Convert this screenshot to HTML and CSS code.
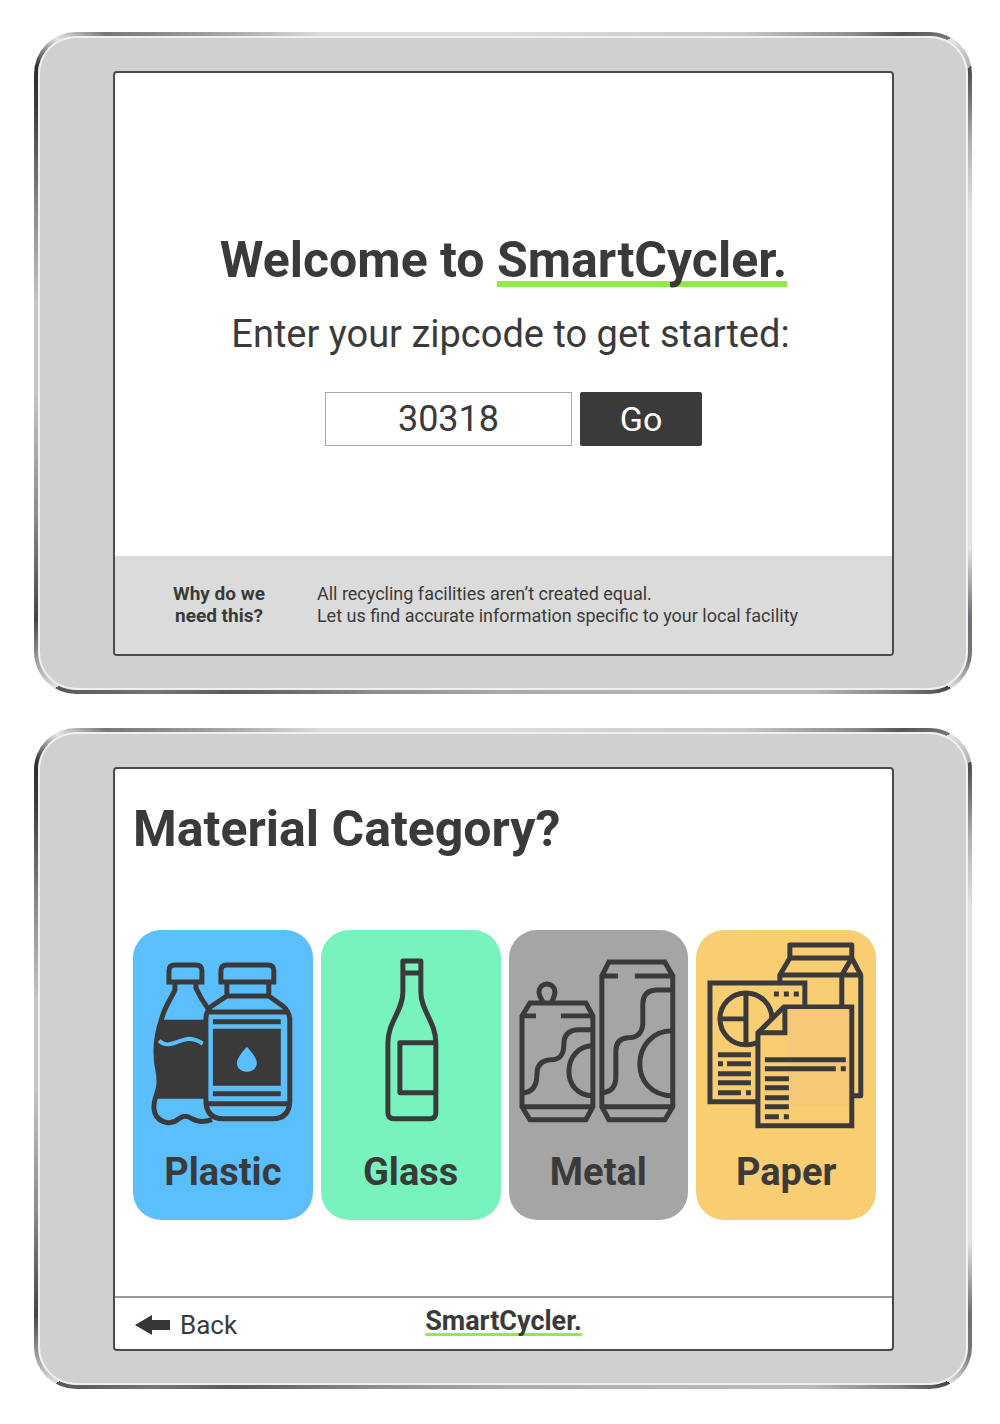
FILE: index.html
```html
<!DOCTYPE html>
<html lang="en">
<head>
<meta charset="utf-8">
<meta name="viewport" content="width=device-width, initial-scale=1">
<title>SmartCycler</title>
<link rel="stylesheet" href="styles.css">
</head>
<body>
<main class="stage">
  <section class="tablet">
    <div class="screen">
      <div class="welcome">
        <h1 class="title">Welcome to <span class="brand">SmartCycler.</span></h1>
        <form class="zip-form">
          <label class="prompt" for="zip">Enter your zipcode to get started:</label>
          <div class="zip-row">
            <input class="zip-input" id="zip" type="text" inputmode="numeric" value="30318">
            <button class="go" type="submit">Go</button>
          </div>
        </form>
      </div>
      <aside class="why">
        <h2 class="why-title">Why do we<br>need this?</h2>
        <p class="why-text">All recycling facilities aren’t created equal.<br>Let us find accurate information specific to your local facility</p>
      </aside>
    </div>
  </section>

  <section class="tablet">
    <div class="screen">
      <div class="category">
        <h2 class="title">Material Category?</h2>
        <div class="cards">
          <button class="card plastic" type="button">
            <svg class="art" viewBox="0 0 180 210" fill="none" stroke="#3a3a3a" stroke-width="5" aria-hidden="true">
              <path d="M36 52V41q0-6 6-6H63q6 0 6 6V52Z"/>
              <path d="M42 52V60C38 69 32 76 29 88C22 108 22 127 25 141C29 164 20 164 21 179C22 192 37 197 46 189Q52 184 59 189Q67 194 79 190M63 52V58Q68 69 76 80"/>
              <path d="M27 90H75V169H24C29 157 28 148 25 140C21 124 22 105 27 90Z" fill="#3a3a3a" stroke="none"/>
              <path d="M26 111C36 120 46 109 57 109Q65 110 70 114" stroke="#5bbffd" stroke-width="4"/>
              <path d="M88 52V41q0-6 6-6h41q6 0 6 6v11ZM94 52v12M136 52v12M92 66h46M94 66L79 76Q73 81 73 89V172Q74 189 90 189H140Q156 189 157 172V89Q156 81 150 76L136 66M76 82h78M73 174h84"/>
              <path d="M80 92h68M80 164h68"/>
              <path d="M80 99h68v57H80Z" fill="#3a3a3a" stroke="none"/>
              <path d="M114 117Q104 128 104 133C104 145 124 145 124 133Q124 128 114 117Z" fill="#5bbffd" stroke="none"/>
            </svg>
            <span class="name">Plastic</span>
          </button>
          <button class="card glass" type="button">
            <svg class="art" viewBox="0 0 180 210" fill="none" stroke="#3a3a3a" stroke-width="5" stroke-linejoin="round" aria-hidden="true">
              <path d="M82 31h18V62C100 81 115 92 115 113V183q0 6-6 6H73q-6 0-6-6V113C67 92 82 81 82 62ZM82 43h18M115 113H79v50h36"/>
            </svg>
            <span class="name">Glass</span>
          </button>
          <button class="card metal" type="button">
            <svg class="art" viewBox="0 0 180 210" fill="none" stroke="#3a3a3a" stroke-width="5" aria-hidden="true">
              <path d="M21 73H77L84 86V177L77 190H21L13 177V86ZM13 86H27M52 86H84M13 177H84"/>
              <path d="M34 72C31 67 30 65 30 62A8 8 0 0 1 46 62C46 65 45 67 43 72"/>
              <path d="M84 100H69Q55 101 55 114C55 127 49 130 42 130Q28 131 28 144C28 158 22 163 13 163M84 116C53 116 51 166 84 166"/>
              <path d="M100 32H156L164 46V177L156 190H100L93 177V46ZM93 46H109M126 46H164M93 177H164"/>
              <path d="M164 60H147Q134 61 134 74V94Q133 108 119 108Q107 109 107 121V147Q107 162 93 163M164 101C121 101 119 166 164 166"/>
            </svg>
            <span class="name">Metal</span>
          </button>
          <button class="card paper" type="button">
            <svg class="art" viewBox="0 0 180 210" fill="none" stroke="#3a3a3a" stroke-width="5" aria-hidden="true">
              <path d="M94 28V15h62V28ZM94 28L84 45V53M156 28L165 45V166H157M84 45H165M156 28L146 45V78" stroke-linejoin="round"/>
              <path d="M109 77V53H14V172H63"/>
              <circle cx="50" cy="89" r="26"/>
              <path d="M50 63V115M24 89H50"/>
              <path d="M78 64h5M88 64h5M98 64h5M22 125H55M22 134h5M31 134H55M22 144H55M22 153H55M22 163H45M50 163h5"/>
              <path d="M62 103L88 77H156V196H62Z" fill="#f9cd72"/>
              <path d="M91 79H153V176H92V105H91Z" fill="#f5c878" stroke="none"/>
              <path d="M62 103H89V77"/>
              <path d="M69 130H150M69 139H140M145 139h5M69 149H93M69 158H93M69 168H93M69 177H93M69 187H83M88 187h5"/>
            </svg>
            <span class="name">Paper</span>
          </button>
        </div>
      </div>
      <footer class="bar">
        <a class="back" href="#">
          <svg class="arrow" viewBox="0 0 35 20" aria-hidden="true"><path d="M0 10L17 0V5H35V15H17V20Z" fill="#3a3535"/></svg>
          Back
        </a>
        <span class="brand brand-small">SmartCycler.</span>
      </footer>
    </div>
  </section>
</main>
</body>
</html>
```
FILE: styles.css
```css
* {
  box-sizing: border-box;
}

body {
  margin: 0;
  background: #fff;
  color: #3a3a3a;
  font-family: Roboto, "Liberation Sans", sans-serif;
}

h1, h2, p {
  margin: 0;
}

button, input {
  font: inherit;
  color: inherit;
}

.stage {
  display: grid;
  gap: 34px;
  padding: 32px 28px 34px 34px;
}

.tablet {
  padding: 35px 74px 34px 75px;
  border: 4px solid transparent;
  border-radius: 42px;
  background:
    linear-gradient(#d0d0d0, #d0d0d0) padding-box,
    conic-gradient(
      #dcdedd 0%, #c8cac9 10%, #8d8d90 13%, #55555a 14%, #77777a 15%, #e6e6e6 15%,
      #b0b0b0 16%, #4a4a4c 16%, #b0b4b2 18%, #dfe3e1 20%, #dfe3e1 31%,
      #6e6e76 33%, #77777a 34%, #e0e0e0 35%, #444 35%, #808080 36%, #b8bcba 38%,
      #a9abaa 50%, #8d8d8f 56%, #5a5960 61%, #77777a 63%, #55555a 65%,
      #444 65%, #e0e0e0 65%, #9a9a9a 66%, #44444a 67%, #8c8c90 70%,
      #c4c6c5 74%, #c4c6c5 77%, #8c8c90 80%, #3a3a40 83%, #2c2c2e 84%,
      #e4e4e4 85%, #77777a 86%, #99999c 88%, #dcdedd 92%, #dcdedd 100%
    ) border-box;
  box-shadow: inset 0 0 0 2px #f0f0f0;
}

.screen {
  display: flex;
  flex-direction: column;
  border: 2px solid #4b4b4d;
  border-radius: 4px;
  background: #fff;
  overflow: hidden;
}

.welcome {
  display: flex;
  flex-direction: column;
  align-items: center;
  padding: 157px 20px 110px;
}

.title {
  font-size: 50px;
  line-height: 60px;
  font-weight: 700;
}

.brand {
  text-decoration: underline #92e94a 6px;
  text-decoration-skip-ink: none;
  text-underline-offset: 4px;
}

.zip-form {
  display: flex;
  flex-direction: column;
  align-items: center;
  gap: 34px;
  padding: 20px 0 0 14px;
}

.prompt {
  font-size: 38px;
  line-height: 48px;
}

.zip-row {
  display: flex;
  gap: 8px;
  padding-left: 6px;
}

.zip-input {
  width: 247px;
  height: 54px;
  padding: 0;
  border: 1px solid #aaa;
  border-radius: 0;
  font-size: 36px;
  text-align: center;
}

.go {
  width: 122px;
  border: 0;
  border-radius: 2px;
  background: #3a3a3a;
  color: #fff;
  font-size: 34px;
}

.why {
  display: flex;
  gap: 52px;
  padding: 27px 58px;
  background: #dbdbdb;
  font-size: 18px;
  line-height: 22px;
}

.why-title {
  font-size: 19px;
  line-height: 22px;
  text-align: center;
}

.category {
  padding: 30px 16px 76px 18px;
}

.cards {
  display: grid;
  grid-template-columns: repeat(4, 1fr);
  gap: 8px;
  padding-top: 71px;
}

.card {
  display: flex;
  flex-direction: column;
  align-items: center;
  padding: 0 0 24px;
  border: 0;
  border-radius: 28px;
}

.plastic { background: #5bbffd; }
.glass { background: #79f3bd; }
.metal { background: #a5a5a5; }
.paper { background: #f9cd72; }

.art {
  display: block;
  width: 100%;
}

.name {
  margin-top: 8px;
  font-size: 38px;
  line-height: 48px;
  font-weight: 700;
}

.bar {
  display: grid;
  grid-template-columns: 1fr auto 1fr;
  align-items: center;
  height: 53px;
  padding: 0 20px;
  border-top: 2px solid #999;
}

.back {
  display: flex;
  align-items: center;
  gap: 10px;
  padding-top: 4px;
  color: inherit;
  font-size: 26px;
  text-decoration: none;
}

.arrow {
  width: 35px;
  height: 20px;
}

.brand-small {
  padding-bottom: 4px;
  font-size: 27px;
  font-weight: 700;
  text-decoration-thickness: 3px;
  text-underline-offset: 3px;
}
```
